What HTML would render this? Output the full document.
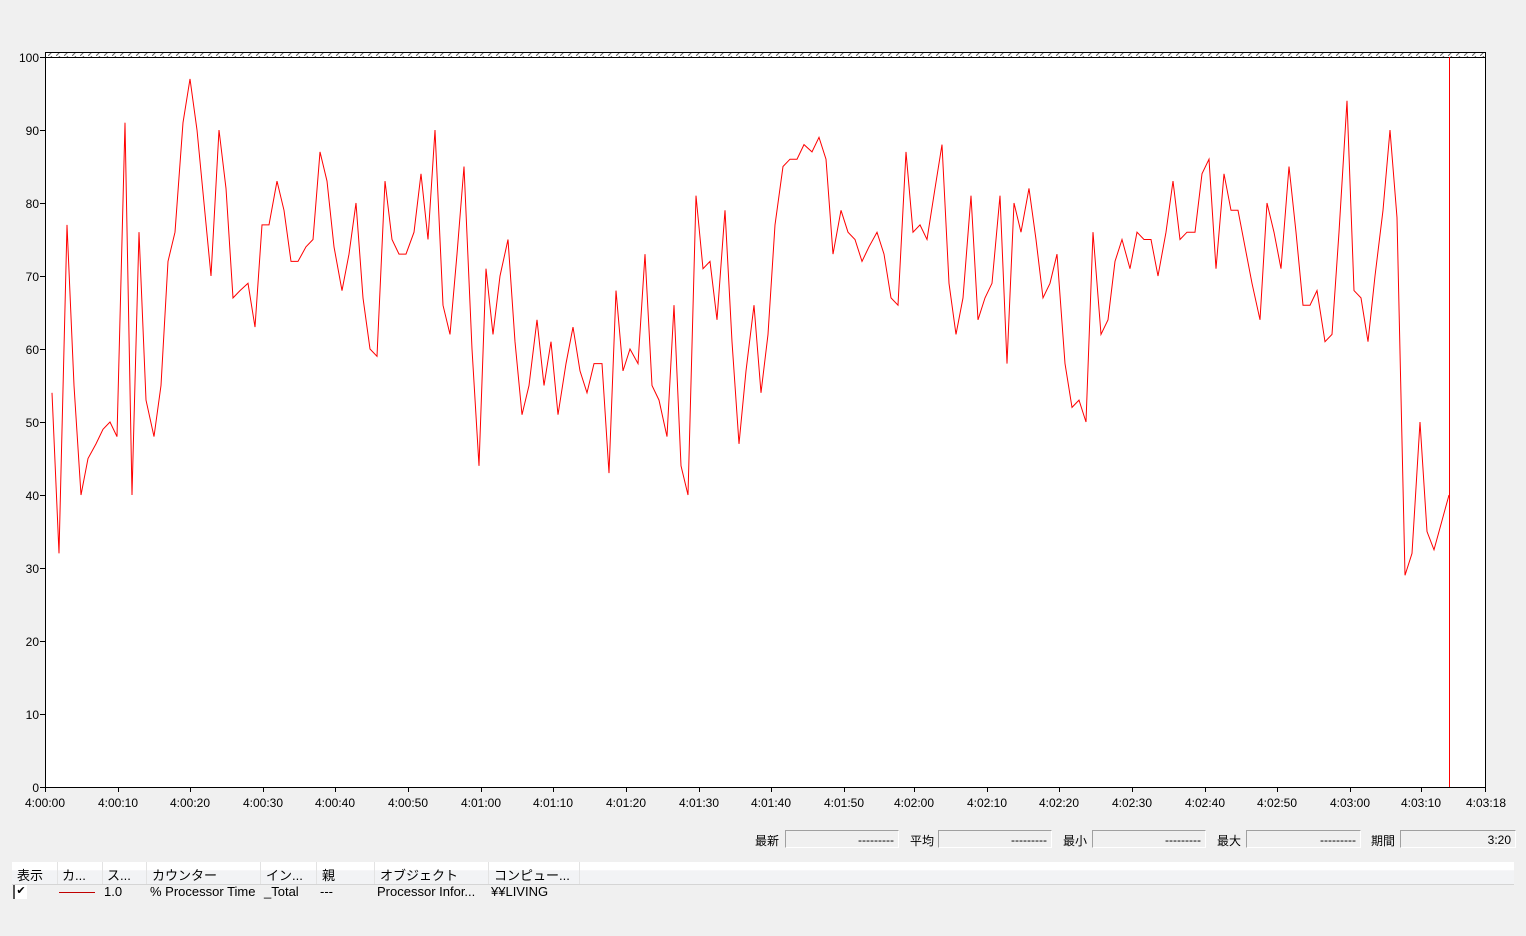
<!DOCTYPE html>
<html><head><meta charset="utf-8"><style>
body{margin:0;width:1526px;height:936px;background:#f0f0f0;font-family:"Liberation Sans","Noto Sans CJK JP",sans-serif;font-size:12px;color:#000;position:relative;overflow:hidden}
.ab{position:absolute;white-space:nowrap}
.t{font-size:13px}
.box{position:absolute;top:830px;height:18px;border:1px solid #a0a0a0;border-right-color:#fff;border-bottom-color:#fff;text-align:right;line-height:18px;box-sizing:border-box;padding-right:4px}
.hd{position:absolute;top:862px;left:12px;width:1502px;height:22px;background:linear-gradient(#fff 0,#fff 35%,#f2f3f5 40%,#f2f3f5 100%);border-bottom:1px solid #d5d5d5}
.sep{position:absolute;top:862px;height:22px;width:1px;background:#e3e3e3}
</style></head><body>
<svg class="ab" style="left:0;top:0" width="1526" height="820">
<defs><pattern id="h" width="8" height="4" patternUnits="userSpaceOnUse"><line x1="0" y1="4" x2="4" y2="0" stroke="#666" stroke-width="1"/></pattern></defs>
<rect x="45" y="53" width="1440" height="734" fill="#fff"/>
<rect x="45" y="53" width="1440" height="4" fill="url(#h)"/>
<line x1="45" y1="57.5" x2="1485" y2="57.5" stroke="#000"/>
<rect x="45.5" y="52.5" width="1440" height="735" fill="none" stroke="#000"/>
<rect x="1449" y="57" width="1" height="730" fill="#ff0000"/>
<g stroke="#000">
<line x1="40" y1="57.5" x2="45" y2="57.5"/><line x1="40" y1="130.5" x2="45" y2="130.5"/><line x1="40" y1="203.5" x2="45" y2="203.5"/><line x1="40" y1="276.5" x2="45" y2="276.5"/><line x1="40" y1="349.5" x2="45" y2="349.5"/><line x1="40" y1="422.5" x2="45" y2="422.5"/><line x1="40" y1="495.5" x2="45" y2="495.5"/><line x1="40" y1="568.5" x2="45" y2="568.5"/><line x1="40" y1="641.5" x2="45" y2="641.5"/><line x1="40" y1="714.5" x2="45" y2="714.5"/><line x1="40" y1="787.5" x2="45" y2="787.5"/>
</g>
<g font-family="Liberation Sans, sans-serif" font-size="12" text-anchor="end">
<text x="39" y="62">100</text><text x="39" y="135">90</text><text x="39" y="208">80</text><text x="39" y="281">70</text><text x="39" y="354">60</text><text x="39" y="427">50</text><text x="39" y="500">40</text><text x="39" y="573">30</text><text x="39" y="646">20</text><text x="39" y="719">10</text><text x="39" y="792">0</text>
</g>
<g font-family="Liberation Sans, sans-serif" font-size="12" text-anchor="middle">
<text x="45" y="807">4:00:00</text><text x="118" y="807">4:00:10</text><text x="190" y="807">4:00:20</text><text x="263" y="807">4:00:30</text><text x="335" y="807">4:00:40</text><text x="408" y="807">4:00:50</text><text x="481" y="807">4:01:00</text><text x="553" y="807">4:01:10</text><text x="626" y="807">4:01:20</text><text x="699" y="807">4:01:30</text><text x="771" y="807">4:01:40</text><text x="844" y="807">4:01:50</text><text x="914" y="807">4:02:00</text><text x="987" y="807">4:02:10</text><text x="1059" y="807">4:02:20</text><text x="1132" y="807">4:02:30</text><text x="1205" y="807">4:02:40</text><text x="1277" y="807">4:02:50</text><text x="1350" y="807">4:03:00</text><text x="1421" y="807">4:03:10</text><text x="1486" y="807">4:03:18</text>
</g>
<g stroke="#000">
<line x1="45.5" y1="787" x2="45.5" y2="792"/><line x1="118.5" y1="787" x2="118.5" y2="792"/><line x1="190.5" y1="787" x2="190.5" y2="792"/><line x1="263.5" y1="787" x2="263.5" y2="792"/><line x1="335.5" y1="787" x2="335.5" y2="792"/><line x1="408.5" y1="787" x2="408.5" y2="792"/><line x1="481.5" y1="787" x2="481.5" y2="792"/><line x1="553.5" y1="787" x2="553.5" y2="792"/><line x1="626.5" y1="787" x2="626.5" y2="792"/><line x1="699.5" y1="787" x2="699.5" y2="792"/><line x1="771.5" y1="787" x2="771.5" y2="792"/><line x1="844.5" y1="787" x2="844.5" y2="792"/><line x1="914.5" y1="787" x2="914.5" y2="792"/><line x1="987.5" y1="787" x2="987.5" y2="792"/><line x1="1059.5" y1="787" x2="1059.5" y2="792"/><line x1="1132.5" y1="787" x2="1132.5" y2="792"/><line x1="1205.5" y1="787" x2="1205.5" y2="792"/><line x1="1277.5" y1="787" x2="1277.5" y2="792"/><line x1="1350.5" y1="787" x2="1350.5" y2="792"/><line x1="1421.5" y1="787" x2="1421.5" y2="792"/><line x1="1485.5" y1="787" x2="1485.5" y2="792"/>
</g>
<g transform="translate(0,787) scale(1,-7.3)">
<polyline fill="none" stroke="#ff0000" stroke-width="1" vector-effect="non-scaling-stroke" points="52,54 59,32 67,77 74,55 81,40 88,45 96,47 103,49 110,50 117,48 125,91 132,40 139,76 146,53 154,48 161,55 168,72 175,76 183,91 190,97 197,90 204,80 211,70 219,90 226,82 233,67 240,68 248,69 255,63 262,77 269,77 277,83 284,79 291,72 298,72 306,74 313,75 320,87 327,83 334,74 342,68 349,73 356,80 363,67 370,60 377,59 385,83 392,75 399,73 406,73 414,76 421,84 428,75 435,90 443,66 450,62 457,73 464,85 472,60 479,44 486,71 493,62 500,70 508,75 515,61 522,51 529,55 537,64 544,55 551,61 558,51 566,58 573,63 580,57 587,54 594,58 602,58 609,43 616,68 623,57 630,60 638,58 645,73 652,55 659,53 667,48 674,66 681,44 688,40 696,81 703,71 710,72 717,64 725,79 732,61 739,47 746,57 754,66 761,54 768,62 775,77 783,85 790,86 797,86 804,88 812,87 819,89 826,86 833,73 841,79 848,76 855,75 862,72 869,74 877,76 884,73 891,67 898,66 906,87 913,76 920,77 927,75 935,82 942,88 949,69 956,62 963,67 971,81 978,64 985,67 992,69 1000,81 1007,58 1014,80 1021,76 1029,82 1036,75 1043,67 1050,69 1057,73 1065,58 1072,52 1079,53 1086,50 1093,76 1101,62 1108,64 1115,72 1122,75 1130,71 1137,76 1144,75 1151,75 1158,70 1166,76 1173,83 1180,75 1187,76 1195,76 1202,84 1209,86 1216,71 1224,84 1231,79 1238,79 1245,74 1252,69 1260,64 1267,80 1274,76 1281,71 1289,85 1296,76 1303,66 1310,66 1317,68 1325,61 1332,62 1339,76 1347,94 1354,68 1361,67 1368,61 1375,70 1383,79 1390,90 1397,78 1405,29 1412,32 1420,50 1427,35 1434,32.5 1441,36 1449,40"/>
</g>
</svg>
<div class="ab" style="left:755px;top:832px">最新</div><div class="box" style="left:785px;width:114px">---------</div>
<div class="ab" style="left:910px;top:832px">平均</div><div class="box" style="left:938px;width:114px">---------</div>
<div class="ab" style="left:1063px;top:832px">最小</div><div class="box" style="left:1092px;width:114px">---------</div>
<div class="ab" style="left:1217px;top:832px">最大</div><div class="box" style="left:1246px;width:115px">---------</div>
<div class="ab" style="left:1371px;top:832px">期間</div><div class="box" style="left:1400px;width:116px">3:20</div>
<div class="hd"></div>
<div class="sep" style="left:57px"></div><div class="sep" style="left:102px"></div><div class="sep" style="left:146px"></div><div class="sep" style="left:260px"></div><div class="sep" style="left:316px"></div><div class="sep" style="left:374px"></div><div class="sep" style="left:488px"></div><div class="sep" style="left:579px"></div>
<div class="ab t" style="top:865px;left:17px">表示</div>
<div class="ab t" style="top:865px;left:62px">カ...</div>
<div class="ab t" style="top:865px;left:107px">ス...</div>
<div class="ab t" style="top:865px;left:152px">カウンター</div>
<div class="ab t" style="top:865px;left:266px">イン...</div>
<div class="ab t" style="top:865px;left:322px">親</div>
<div class="ab t" style="top:865px;left:380px">オブジェクト</div>
<div class="ab t" style="top:865px;left:494px">コンピュー...</div>
<div class="ab" style="top:885px;left:13px;width:14px;height:14px;background:#fff;border-left:2px solid #555;box-sizing:border-box;font-size:11px;line-height:13px;text-align:center">✔</div>
<div class="ab" style="top:892px;left:59px;width:36px;height:1px;background:#c00000"></div>
<div class="ab t" style="top:884px;left:104px">1.0</div>
<div class="ab t" style="top:884px;left:150px">% Processor Time</div>
<div class="ab t" style="top:884px;left:264px">_Total</div>
<div class="ab t" style="top:884px;left:320px">---</div>
<div class="ab t" style="top:884px;left:377px">Processor Infor...</div>
<div class="ab t" style="top:884px;left:491px">¥¥LIVING</div>
</body></html>
